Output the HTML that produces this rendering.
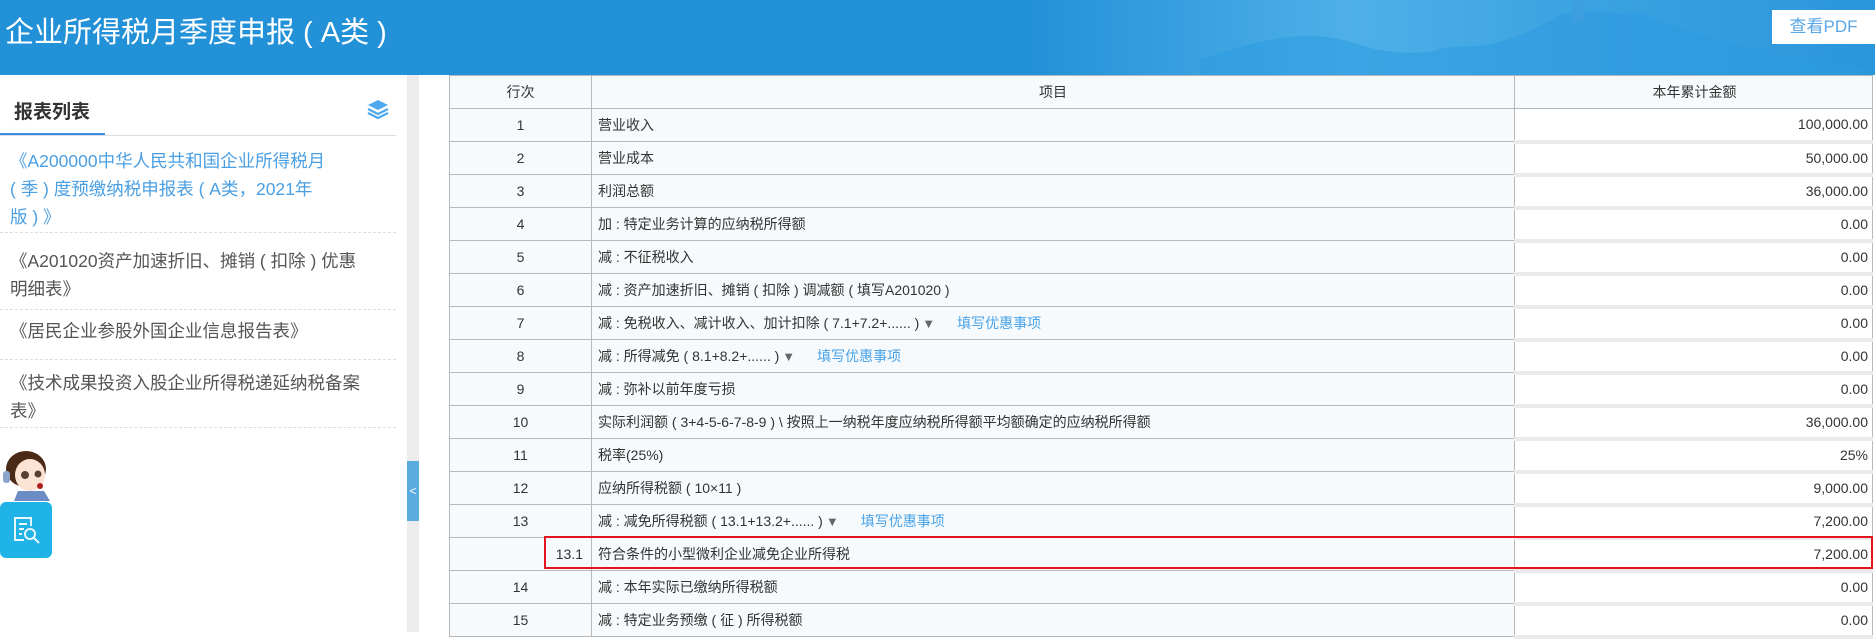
<!DOCTYPE html>
<html><head><meta charset="utf-8"><style>
*{margin:0;padding:0;box-sizing:border-box}
body{width:1875px;height:632px;overflow:hidden;background:#fff;font-family:"Liberation Sans","Noto Sans CJK SC",sans-serif;position:relative;color:#333}
.hdr{position:absolute;left:0;top:0;width:1875px;height:75px;background:linear-gradient(90deg,#2391d8 0%,#2391d8 55%,#4fb0e8 72%,#3aa2e0 85%,#2a96db 100%);overflow:hidden}
.hdr h1{position:absolute;left:5px;top:9px;font-size:29px;font-weight:normal;color:#fff;letter-spacing:0}
.pdf{position:absolute;left:1772px;top:10px;width:103px;height:34px;background:#fff;color:#5aa6e6;font-size:17px;text-align:center;line-height:34px}
.left{position:absolute;left:0;top:75px;width:407px;height:557px}
.ttl{position:absolute;left:14px;top:22px;font-size:19px;font-weight:bold;color:#333}
.ul{position:absolute;left:0;top:58px;width:105px;height:3px;background:#3a8ee6}
.ln{position:absolute;left:0;top:60px;width:396px;height:1px;background:#ddd}
.item{position:absolute;left:10px;white-space:nowrap;font-size:17.5px;line-height:28px;color:#555}
.sep{position:absolute;left:0;width:396px;border-top:1px dashed #ddd}
.bar{position:absolute;left:407px;top:75px;width:12px;height:557px;background:#ececec}
.handle{position:absolute;left:407px;top:461px;width:12px;height:60px;background:#5aace0;color:#fff;font-size:12px;line-height:60px;text-align:center}
table{position:absolute;left:449px;top:75px;border-collapse:collapse;font-size:14px;color:#333}
td{border:1px solid #b8b8b8;height:33px;padding:0 6px;background:#f7fafc;white-space:nowrap}
td.n{width:142px;text-align:center}
td.i{width:923px}
td.a{width:358px;background:#fff;text-align:right;padding-right:4px;border-bottom:4px solid #ece9ea}
tr.h td{text-align:center;background:#f7fafc;border-bottom:1px solid #b8b8b8}
.lk{color:#4aa3e8;margin-left:22px}
.tri{color:#666;font-size:13px;margin-left:3px}
.red{position:absolute;left:544px;top:536px;width:1329px;height:33px;border:2px solid #e3141e}
</style></head><body>
<div class="hdr"><h1>企业所得税月季度申报 ( A类 )</h1>
<svg style="position:absolute;left:1200px;top:0" width="675" height="75"><path d="M0 60 Q40 45 70 40 Q120 30 160 45 Q190 55 230 52 Q250 45 280 46 Q320 40 360 15 Q380 8 420 14 L440 12 L470 25 Q520 40 560 50 Q600 60 675 70 L675 75 L0 75Z" fill="#2b9be0" opacity=".55"/><rect x="372" y="0" width="12" height="22" fill="#3c9edf"/></svg>
<div class="pdf">查看PDF</div></div>
<div class="left">
<div class="ttl">报表列表</div>
<svg style="position:absolute;left:367px;top:25px" width="22" height="20" viewBox="0 0 22 20"><path d="M11 0L21 5 11 10 1 5Z" fill="#4ea8ee"/><path d="M1 9L11 14 21 9" stroke="#4ea8ee" stroke-width="2.2" fill="none"/><path d="M1 13L11 18 21 13" stroke="#4ea8ee" stroke-width="2.2" fill="none"/></svg>
<div class="ul"></div><div class="ln"></div>
<div class="item" style="top:72px;color:#4a9fe3">《A200000中华人民共和国企业所得税月<br>( 季 ) 度预缴纳税申报表 ( A类，2021年<br>版 ) 》</div>
<div class="sep" style="top:157px"></div>
<div class="item" style="top:172px">《A201020资产加速折旧、摊销 ( 扣除 ) 优惠<br>明细表》</div>
<div class="sep" style="top:234px"></div>
<div class="item" style="top:242px">《居民企业参股外国企业信息报告表》</div>
<div class="sep" style="top:284px"></div>
<div class="item" style="top:294px">《技术成果投资入股企业所得税递延纳税备案<br>表》</div>
<div class="sep" style="top:352px"></div>
<svg style="position:absolute;left:0;top:370px" width="54" height="56" viewBox="0 0 54 56"><ellipse cx="26" cy="24" rx="20" ry="18" fill="#4a2a16"/><ellipse cx="30" cy="30" rx="15" ry="16" fill="#fde3d3"/><circle cx="25" cy="30" r="4" fill="#5a4030"/><circle cx="38" cy="29" r="3.5" fill="#5a4030"/><rect x="3" y="26" width="7" height="12" rx="3" fill="#8aa4cc"/><path d="M18 46 L44 46 L50 56 L14 56Z" fill="#6b8cc4"/><circle cx="40" cy="41" r="3" fill="#b02020"/></svg>
<div style="position:absolute;left:0;top:427px;width:52px;height:56px;background:#20b3e8;border-radius:6px"><svg width="52" height="56" viewBox="0 0 52 56"><path d="M24 38H15V16H31V24M19 22H27M19 27H24M19 32H22" stroke="#e8f7fd" stroke-width="2" fill="none"/><circle cx="30" cy="32" r="5" stroke="#e8f7fd" stroke-width="2" fill="none"/><path d="M34 36L39 41" stroke="#e8f7fd" stroke-width="2"/></svg></div>
</div>
<div class="bar"></div><div class="handle">&lt;</div>
<table>
<tr class="h"><td class="n">行次</td><td class="i" style="text-align:center">项目</td><td class="a" style="text-align:center;background:#f7fafc;border-bottom:1px solid #b8b8b8">本年累计金额</td></tr>
<tr><td class="n">1</td><td class="i">营业收入</td><td class="a">100,000.00</td></tr>
<tr><td class="n">2</td><td class="i">营业成本</td><td class="a">50,000.00</td></tr>
<tr><td class="n">3</td><td class="i">利润总额</td><td class="a">36,000.00</td></tr>
<tr><td class="n">4</td><td class="i">加 : 特定业务计算的应纳税所得额</td><td class="a">0.00</td></tr>
<tr><td class="n">5</td><td class="i">减 : 不征税收入</td><td class="a">0.00</td></tr>
<tr><td class="n">6</td><td class="i">减 : 资产加速折旧、摊销 ( 扣除 ) 调减额 ( 填写A201020 )</td><td class="a">0.00</td></tr>
<tr><td class="n">7</td><td class="i">减 : 免税收入、减计收入、加计扣除 ( 7.1+7.2+...... )<span class="tri">▼</span><span class="lk">填写优惠事项</span></td><td class="a">0.00</td></tr>
<tr><td class="n">8</td><td class="i">减 : 所得减免 ( 8.1+8.2+...... )<span class="tri">▼</span><span class="lk">填写优惠事项</span></td><td class="a">0.00</td></tr>
<tr><td class="n">9</td><td class="i">减 : 弥补以前年度亏损</td><td class="a">0.00</td></tr>
<tr><td class="n">10</td><td class="i">实际利润额 ( 3+4-5-6-7-8-9 ) \ 按照上一纳税年度应纳税所得额平均额确定的应纳税所得额</td><td class="a">36,000.00</td></tr>
<tr><td class="n">11</td><td class="i">税率(25%)</td><td class="a">25%</td></tr>
<tr><td class="n">12</td><td class="i">应纳所得税额 ( 10×11 )</td><td class="a">9,000.00</td></tr>
<tr><td class="n">13</td><td class="i">减 : 减免所得税额 ( 13.1+13.2+...... )<span class="tri">▼</span><span class="lk">填写优惠事项</span></td><td class="a">7,200.00</td></tr>
<tr><td class="n" style="text-align:right;padding-right:8px">13.1</td><td class="i">符合条件的小型微利企业减免企业所得税</td><td class="a">7,200.00</td></tr>
<tr><td class="n">14</td><td class="i">减 : 本年实际已缴纳所得税额</td><td class="a">0.00</td></tr>
<tr><td class="n">15</td><td class="i">减 : 特定业务预缴 ( 征 ) 所得税额</td><td class="a">0.00</td></tr>
</table>
<div class="red"></div>
</body></html>
